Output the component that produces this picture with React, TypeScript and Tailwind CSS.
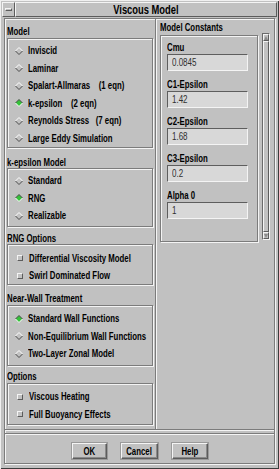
import React from 'react';

const font = "font-['Liberation_Sans',Arial,sans-serif]";
const etched = 'border border-[#7c7c7c] shadow-[inset_1px_1px_0_#f4f4f4,1px_1px_0_#f4f4f4]';
const raised = 'border border-t-[#f4f4f4] border-l-[#f4f4f4] border-r-[#5c5c5c] border-b-[#5c5c5c]';
// the dialog's font is a narrow bold helvetica, so squeeze Liberation Sans sideways
const textCls = 'text-[11px] leading-[11px] font-bold text-black whitespace-pre scale-x-[0.71]';
const labelCls = `h-[11px] origin-left ${textCls}`;

const Diamond = ({ on }: { on?: boolean }) => (
  <svg width="8" height="8" viewBox="0 0 8 8" className="shrink-0">
    <polygon points="4,0.5 7.5,4 4,7.5 0.5,4" fill={on ? '#35c23a' : '#c1c1c1'} />
    <polyline points="0.5,4 4,0.5 7.5,4" fill="none" stroke={on ? '#4a4a4a' : '#ffffff'} strokeWidth="1" />
    <polyline points="0.5,4 4,7.5 7.5,4" fill="none" stroke={on ? '#ffffff' : '#4a4a4a'} strokeWidth="1" />
  </svg>
);

const Radio = ({ label, on }: { label: string; on?: boolean }) => (
  <div className="flex items-center h-[17.5px] pl-[7px]">
    <Diamond on={on} />
    <span className={`ml-[5px] inline-block ${labelCls}`}>{label}</span>
  </div>
);

const Check = ({ label }: { label: string }) => (
  <div className="flex items-center h-[17.5px] pl-[9px]">
    <span className={`w-[6px] h-[6px] shrink-0 bg-[#c1c1c1] ${raised}`} />
    <span className={`ml-[6px] inline-block ${labelCls}`}>{label}</span>
  </div>
);

const Field = ({ label, value }: { label: string; value: string }) => (
  <div className="mb-[7.5px]">
    <div className={`${labelCls} mb-[1.5px]`}>{label}</div>
    <div className="h-[17px] w-[81px] bg-[#d8d8d8] border border-t-[#5e5e5e] border-l-[#5e5e5e] border-r-[#f4f4f4] border-b-[#f4f4f4] flex items-center pl-[4px]">
      <span className="inline-block origin-left scale-x-[0.8] text-[10px] leading-[10px] text-[#303030]">{value}</span>
    </div>
  </div>
);

const Button = ({ label, w }: { label: string; w: string }) => (
  <div className={`${w} h-[16px] flex items-center justify-center bg-[#c1c1c1] ${raised} shadow-[inset_-1px_-1px_0_#8a8a8a,0_0_0_1px_#9a9a9a]`}>
    <span className={`inline-block origin-center ${textCls}`}>{label}</span>
  </div>
);

export default function App() {
  const models = [
    { label: 'Inviscid' },
    { label: 'Laminar' },
    { label: 'Spalart-Allmaras    (1 eqn)' },
    { label: 'k-epsilon    (2 eqn)', on: true },
    { label: 'Reynolds Stress   (7 eqn)' },
    { label: 'Large Eddy Simulation' },
  ];
  const constants = [
    { label: 'Cmu', value: '0.0845' },
    { label: 'C1-Epsilon', value: '1.42' },
    { label: 'C2-Epsilon', value: '1.68' },
    { label: 'C3-Epsilon', value: '0.2' },
    { label: 'Alpha 0', value: '1' },
  ];

  return (
    <div className={`${font} w-[279px] h-[469px] bg-[#c1c1c1] p-[2px] flex flex-col shadow-[inset_1px_1px_0_#f0f0f0,inset_-1px_-1px_0_#3c3c3c]`}>
      {/* title bar */}
      <div className="h-[15px] flex shrink-0">
        <div className={`w-[13px] h-full flex items-center justify-center ${raised}`}>
          <span className={`w-[7px] h-[3px] ${raised}`} />
        </div>
        <div className={`flex-1 h-full flex items-center justify-center ${raised}`}>
          <span className="inline-block scale-x-[0.78] text-[12px] leading-[12px] font-bold text-black">Viscous Model</span>
        </div>
      </div>

      <div className={`flex-1 mx-[2px] mt-[1px] mb-[3px] flex flex-col ${etched}`}>
        <div className="h-[410px] flex shrink-0">
          {/* left column */}
          <div className="w-[150px] pl-[2px] pr-[2px] pt-[7px] flex flex-col">
            <div className={labelCls}>Model</div>
            <div className={`mt-[1px] h-[110px] pt-[3px] ${etched}`}>
              {models.map((m) => (
                <Radio key={m.label} label={m.label} on={m.on} />
              ))}
            </div>

            <div className={`mt-[9px] ${labelCls}`}>k-epsilon Model</div>
            <div className={`h-[59px] pt-[3px] ${etched}`}>
              <Radio label="Standard" />
              <Radio label="RNG" on />
              <Radio label="Realizable" />
            </div>

            <div className={`mt-[6px] ${labelCls}`}>RNG Options</div>
            <div className={`h-[41px] pt-[4.5px] ${etched}`}>
              <Check label="Differential Viscosity Model" />
              <Check label="Swirl Dominated Flow" />
            </div>

            <div className={`mt-[8px] ${labelCls}`}>Near-Wall Treatment</div>
            <div className={`mt-[1px] h-[61px] pt-[4px] ${etched}`}>
              <Radio label="Standard Wall Functions" on />
              <Radio label="Non-Equilibrium Wall Functions" />
              <Radio label="Two-Layer Zonal Model" />
            </div>

            <div className={`mt-[5px] ${labelCls}`}>Options</div>
            <div className={`mt-[1px] h-[42px] pt-[4px] ${etched}`}>
              <Check label="Viscous Heating" />
              <Check label="Full Buoyancy Effects" />
            </div>
          </div>

          {/* divider */}
          <div className="w-[2px] border-l border-l-[#7c7c7c] border-r border-r-[#f4f4f4]" />

          {/* right column */}
          <div className="flex-1 pl-[3px] pt-[3px] flex flex-col">
            <div className={labelCls}>Model Constants</div>
            <div className="mt-[2px] flex items-start">
              <div className={`w-[98px] h-[207px] pl-[6px] pt-[5.5px] ${etched}`}>
                {constants.map((c) => (
                  <Field key={c.label} label={c.label} value={c.value} />
                ))}
              </div>
              <div className="ml-[4px] -mt-[2px] w-[8px] h-[207px] border border-t-[#6a6a6a] border-l-[#6a6a6a] border-r-[#f4f4f4] border-b-[#f4f4f4] bg-[#b4b4b4] flex flex-col">
                <div className={`h-[7px] flex items-center justify-center ${raised} bg-[#c1c1c1]`}>
                  <svg width="4" height="4" viewBox="0 0 4 4"><polygon points="2,0 4,4 0,4" fill="#8a8a8a" /></svg>
                </div>
                <div className={`flex-1 ${raised} bg-[#c1c1c1]`} />
                <div className={`h-[7px] flex items-center justify-center ${raised} bg-[#c1c1c1]`}>
                  <svg width="4" height="4" viewBox="0 0 4 4"><polygon points="0,0 4,0 2,4" fill="#8a8a8a" /></svg>
                </div>
              </div>
            </div>
          </div>
        </div>

        {/* separators */}
        <div className="h-[2px] border-t border-t-[#7c7c7c] border-b border-b-[#f4f4f4]" />
        <div className="mt-[2px] h-[2px] border-t border-t-[#7c7c7c] border-b border-b-[#f4f4f4]" />

        {/* buttons */}
        <div className="pt-[8px] flex justify-center gap-[14px]">
          <Button label="OK" w="w-[35px]" />
          <Button label="Cancel" w="w-[37px]" />
          <Button label="Help" w="w-[36px]" />
        </div>
      </div>
    </div>
  );
}
